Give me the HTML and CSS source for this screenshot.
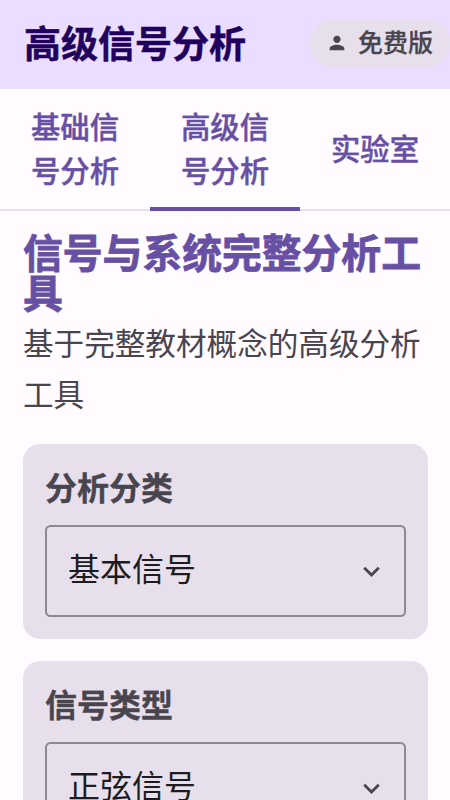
FILE: index.html
```html
<!DOCTYPE html>
<html lang="zh-CN">
<head>
<meta charset="utf-8">
<title>高级信号分析</title>
<link rel="stylesheet" href="styles.css">
</head>
<body>
<header class="appbar">
  <h1 class="appbar-title">高级信号分析</h1>
  <div class="plan">
    <svg class="plan-icon" viewBox="0 0 24 24" aria-hidden="true"><path d="M12 12c2.21 0 4-1.79 4-4s-1.79-4-4-4-4 1.79-4 4 1.79 4 4 4zm0 2c-2.67 0-8 1.34-8 4v2h16v-2c0-2.66-5.33-4-8-4z"/></svg>
    <span class="plan-text">免费版</span>
  </div>
</header>
<nav class="tabs">
  <div class="tab">基础信号分析</div>
  <div class="tab active">高级信号分析</div>
  <div class="tab">实验室</div>
</nav>
<main class="content">
  <h2 class="heading">信号与系统完整分析工具</h2>
  <p class="sub">基于完整教材概念的高级分析工具</p>
  <section class="card">
    <div class="label">分析分类</div>
    <div class="select">
      <span class="value">基本信号</span>
      <svg class="chev" viewBox="0 0 24 24" aria-hidden="true"><path d="M7.41 8.59 12 13.17l4.59-4.58L18 10l-6 6-6-6z"/></svg>
    </div>
  </section>
  <section class="card">
    <div class="label">信号类型</div>
    <div class="select">
      <span class="value">正弦信号</span>
      <svg class="chev" viewBox="0 0 24 24" aria-hidden="true"><path d="M7.41 8.59 12 13.17l4.59-4.58L18 10l-6 6-6-6z"/></svg>
    </div>
  </section>
</main>
</body>
</html>
```
FILE: styles.css
```css
* { box-sizing: border-box; }
html, body { margin: 0; height: 100%; }
body {
  height: 800px;
  overflow: hidden;
  background: #fffbfe;
  font-family: "Noto Sans CJK SC", "Noto Sans", sans-serif;
  color: #1c1b1f;
}
.appbar {
  height: 89px;
  background: #eaddff;
  display: flex;
  align-items: center;
  justify-content: space-between;
  padding-left: 24px;
}
.appbar-title {
  margin: 0;
  padding-bottom: 6px;
  font-size: 37px;
  line-height: 44px;
  font-weight: 700;
  color: #21005d;
  -webkit-text-stroke: 0.5px #21005d;
}
.plan {
  width: 140px;
  height: 49px;
  margin-top: -3px;
  border-radius: 25px;
  background: #e7e0ec;
  color: #49454f;
  display: flex;
  align-items: center;
  padding-left: 16px;
  gap: 10px;
  font-size: 25px;
  font-weight: 500;
  -webkit-text-stroke: 0.3px #49454f;
}
.plan-text { padding-bottom: 4px; }
.plan-icon { width: 22px; height: 22px; fill: #49454f; flex: none; }
.tabs {
  height: 122px;
  display: flex;
  border-bottom: 2px solid #e7e0ec;
}
.tab {
  flex: 1;
  display: flex;
  align-items: center;
  justify-content: center;
  padding: 0 29px 2px;
  text-align: center;
  font-size: 29.4px;
  line-height: 44px;
  font-weight: 500;
  color: #6750a4;
  -webkit-text-stroke: 0.4px #6750a4;
  margin-bottom: -2px;
  border-bottom: 4px solid transparent;
}
.tab.active { border-bottom-color: #6750a4; }
.content { padding: 20px 22px 0 23px; }
.heading {
  margin: 0;
  font-size: 39.8px;
  line-height: 40px;
  font-weight: 700;
  color: #6750a4;
  -webkit-text-stroke: 0.8px #6750a4;
}
.sub {
  margin: 6px 0 25px;
  font-size: 30.6px;
  line-height: 51px;
  color: #49454f;
}
.card {
  background: #e7e0ec;
  border-radius: 17px;
  padding: 20px 22px 22px;
  margin-bottom: 22px;
}
.label {
  font-size: 32px;
  line-height: 44px;
  font-weight: 700;
  color: #49454f;
  -webkit-text-stroke: 0.4px #49454f;
  margin-bottom: 17px;
}
.select {
  height: 92px;
  border: 2px solid #8d8894;
  border-radius: 5.5px;
  display: flex;
  align-items: center;
  justify-content: space-between;
  padding: 0 16px 0 21px;
  font-size: 32px;
}
.value { padding-bottom: 8px; }
.chev { width: 33px; height: 33px; fill: #49454f; flex: none; }
```
